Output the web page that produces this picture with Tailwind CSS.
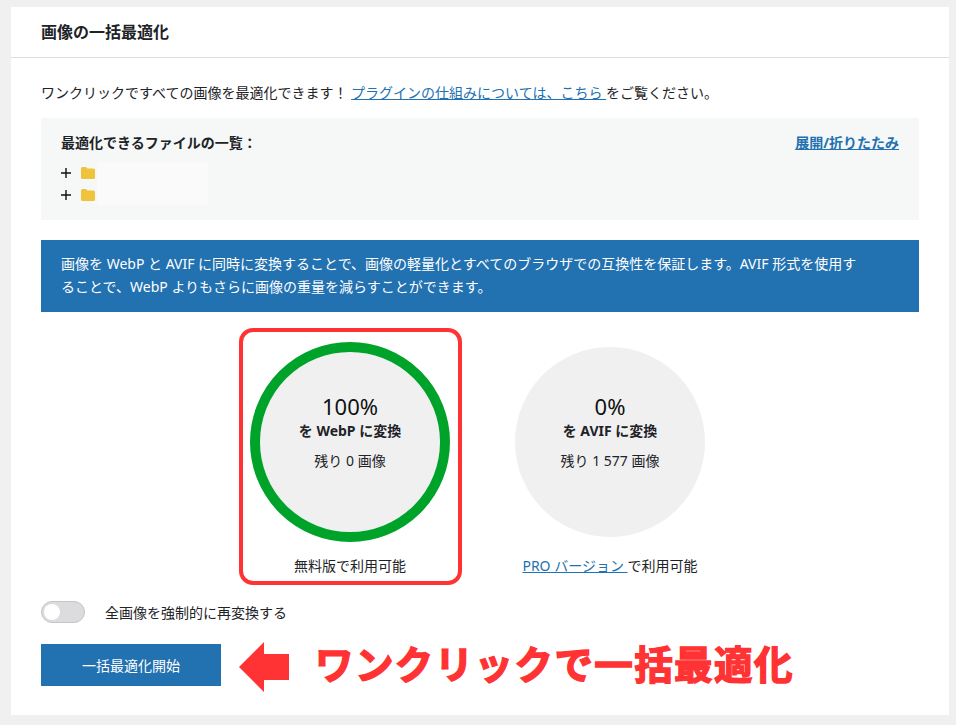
<!DOCTYPE html>
<html lang="ja">
<head>
    <meta charset="UTF-8">
    <title>画像の一括最適化</title>
    <script src="https://cdn.jsdelivr.net/npm/@tailwindcss/browser@4"></script>
</head>
<body class="bg-[#f0f0f1] h-[725px] overflow-hidden pt-[7px] pl-[11px] text-[#1d2327] text-[14px] font-['Noto_Sans','Noto_Sans_CJK_JP',sans-serif]">
    <div class="bg-white w-[938px] h-[708px]">
        <!-- header -->
        <div class="h-[51px] border-b border-[#dcdcde] pl-[30px] flex items-center">
            <h1 class="text-[16px] leading-[24px] font-bold">画像の一括最適化</h1>
        </div>

        <div class="px-[30px]">
            <p class="h-[60px] pt-[24px] leading-[21px]">
                ワンクリックですべての画像を最適化できます！
                <a href="#" class="text-[#2271b1] underline">プラグインの仕組みについては、こちら </a>をご覧ください。
            </p>

            <!-- file tree -->
            <div class="bg-[#f6f7f7] h-[102px] px-[20px] pt-[14px] relative">
                <div class="flex justify-between font-bold leading-[22px]">
                    <span>最適化できるファイルの一覧：</span>
                    <a href="#" class="text-[#2271b1] underline">展開/折りたたみ</a>
                </div>
                <div class="mt-[8px] flex">
                    <div class="flex flex-col">
                        <div class="h-[22px] flex items-center gap-[10px]">
                            <svg class="w-[10px] h-[10px]" viewBox="0 0 10 10"><path d="M0 5h10M5 0v10" stroke="#111" stroke-width="1.4"/></svg>
                            <svg class="w-[14px] h-[12px]" viewBox="0 0 14 12"><path d="M0 1.5Q0 0 1.5 0H5L6.5 1.5H12.5Q14 1.5 14 3V10.5Q14 12 12.5 12H1.5Q0 12 0 10.5Z" fill="#f0c33c"/></svg>
                        </div>
                        <div class="h-[22px] flex items-center gap-[10px]">
                            <svg class="w-[10px] h-[10px]" viewBox="0 0 10 10"><path d="M0 5h10M5 0v10" stroke="#111" stroke-width="1.4"/></svg>
                            <svg class="w-[14px] h-[12px]" viewBox="0 0 14 12"><path d="M0 1.5Q0 0 1.5 0H5L6.5 1.5H12.5Q14 1.5 14 3V10.5Q14 12 12.5 12H1.5Q0 12 0 10.5Z" fill="#f0c33c"/></svg>
                        </div>
                    </div>
                    <div class="ml-[2px] w-[111px] h-[43px] bg-[#fafafa]"></div>
                </div>
            </div>

            <!-- notice -->
            <div class="mt-[20px] bg-[#2271b1] text-white h-[72px] pl-[20px] pr-[60px] py-[12px] leading-[23px]">
                画像を WebP と AVIF に同時に変換することで、画像の軽量化とすべてのブラウザでの互換性を保証します。AVIF 形式を使用することで、WebP よりもさらに画像の重量を減らすことができます。
            </div>

            <!-- circles -->
            <div class="flex justify-center mt-[30px]">
                <div class="w-[260px] relative flex flex-col items-center">
                    <div class="w-[200px] h-[200px] rounded-full bg-[#f0f0f1] border-[10px] border-[#00a32a] flex flex-col items-center pt-[40px]">
                        <div class="text-[22px] leading-[28px] text-[#111]">100%</div>
                        <div class="font-bold leading-[20px] mt-[1px]">を WebP に変換</div>
                        <div class="leading-[20px] mt-[10px]">残り 0 画像</div>
                    </div>
                    <div class="mt-[14px] leading-[20px]">無料版で利用可能</div>
                    <div class="absolute left-[19px] top-[-14px] w-[223px] h-[257px] border-[4px] border-[#ff3333] rounded-[14px]"></div>
                </div>
                <div class="w-[260px] flex flex-col items-center">
                    <div class="w-[190px] h-[190px] mt-[5px] rounded-full bg-[#f0f0f1] flex flex-col items-center pt-[45px]">
                        <div class="text-[22px] leading-[28px] text-[#111]">0%</div>
                        <div class="font-bold leading-[20px] mt-[1px]">を AVIF に変換</div>
                        <div class="leading-[20px] mt-[10px]">残り 1 577 画像</div>
                    </div>
                    <div class="mt-[19px] leading-[20px]"><a href="#" class="text-[#2271b1] underline">PRO バージョン </a>で利用可能</div>
                </div>
            </div>

            <!-- force toggle -->
            <div class="flex items-center mt-[25px]">
                <div class="w-[44px] h-[22px] rounded-full bg-[#dcdcde] border border-[#c3c4c7] p-[2px]">
                    <div class="w-[16px] h-[16px] rounded-full bg-white"></div>
                </div>
                <span class="ml-[20px]">全画像を強制的に再変換する</span>
            </div>

            <!-- start button + annotation -->
            <div class="flex items-center mt-[17px] h-[50px]">
                <button class="w-[180px] h-[42px] bg-[#2271b1] text-white">一括最適化開始</button>
                <svg class="ml-[18px] mt-[3px] w-[50px] h-[50px]" viewBox="0 0 50 50"><path d="M0 25L25 0V12H50V38H25V50Z" fill="#ff3333"/></svg>
                <span class="ml-[26px] mb-[2px] text-[38.5px] leading-[50px] font-bold text-[#ff3333] tracking-[1.4px] [-webkit-text-stroke:1.5px_#ff3333] whitespace-nowrap">ワンクリックで一括最適化</span>
            </div>
        </div>
    </div>
</body>
</html>
